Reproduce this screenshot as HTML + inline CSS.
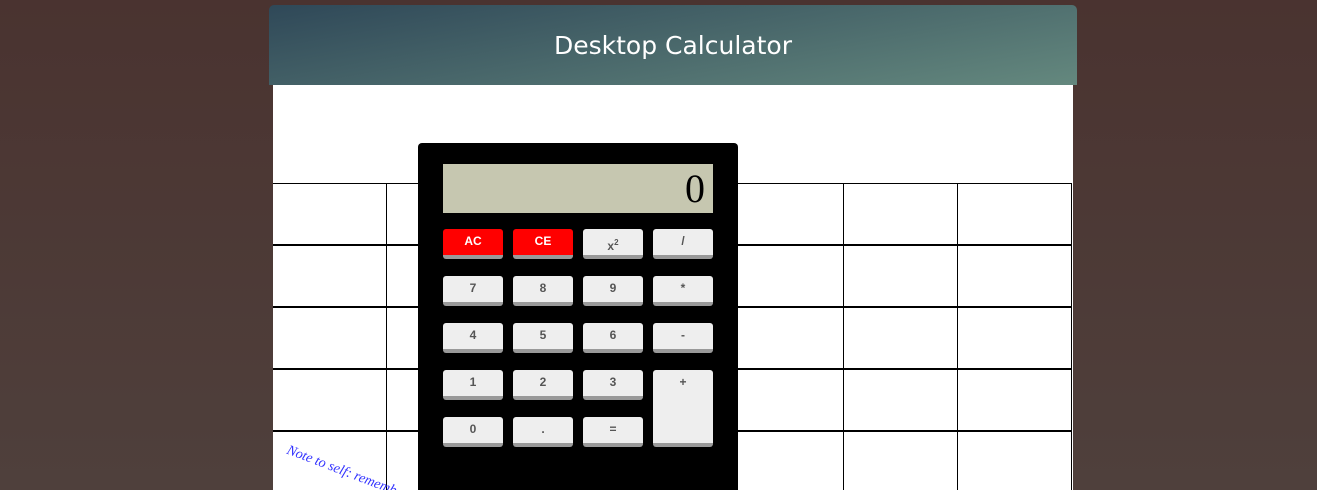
<!DOCTYPE html>
<html><head><style>
html,body{margin:0;width:1317px;height:490px;overflow:hidden}
body{background:linear-gradient(#4a3330,#4f403c);font-family:"Liberation Sans",sans-serif;position:relative}
.hdr{position:absolute;left:269px;top:5px;width:808px;height:80px;border-radius:5px 5px 0 0;background:linear-gradient(170deg,#2f4858,#64887e);color:#fff;text-align:center;line-height:82px;font-size:25px;font-family:"Comic Sans MS","DejaVu Sans",sans-serif}
.wh{position:absolute;left:273px;top:85px;width:800px;height:405px;background:#fff}
.h{position:absolute;left:273px;width:799px;height:2px;background:#000}
.v{position:absolute;top:184px;width:1px;height:306px;background:#000}
.note{position:absolute;left:290px;top:443px;color:#33f;font-family:"Liberation Serif",serif;font-style:italic;font-size:14px;transform:rotate(21deg);transform-origin:0 0;white-space:nowrap}
.calc{position:absolute;left:418px;top:143px;width:320px;height:347px;background:#000;border-radius:4px 4px 0 0}
.disp{position:absolute;left:25px;top:21px;width:270px;height:49px;background:#c6c7b0;text-align:right;font-family:"Liberation Serif",serif;font-size:40px;line-height:50px;box-sizing:border-box;padding-right:8px}
.b{position:absolute;width:60px;height:26px;background:#eee;border-radius:3px;border-bottom:4px solid #999;font-weight:bold;font-size:12px;color:#555;text-align:center;line-height:24px}
.r{background:#f00;color:#fff}
</style></head><body>
<div class="hdr">Desktop Calculator</div>
<div class="wh"></div>
<div class="h" style="top:183px;height:1px"></div>
<div class="h" style="top:244px"></div>
<div class="h" style="top:306px"></div>
<div class="h" style="top:368px"></div>
<div class="h" style="top:430px"></div>
<div class="v" style="left:386px"></div><div class="v" style="left:500px"></div><div class="v" style="left:614px"></div><div class="v" style="left:728px"></div><div class="v" style="left:843px"></div><div class="v" style="left:957px"></div><div class="v" style="left:1071px"></div>
<div class="note">Note to self: remember to</div>
<div class="calc">
<div class="disp">0</div>
<div class="b r" style="left:25px;top:86px">AC</div>
<div class="b r" style="left:95px;top:86px">CE</div>
<div class="b" style="left:165px;top:86px;line-height:28px">x<sup style="font-size:8px">2</sup></div>
<div class="b" style="left:235px;top:86px">/</div>
<div class="b" style="left:25px;top:133px">7</div><div class="b" style="left:95px;top:133px">8</div><div class="b" style="left:165px;top:133px">9</div><div class="b" style="left:235px;top:133px">*</div>
<div class="b" style="left:25px;top:180px">4</div><div class="b" style="left:95px;top:180px">5</div><div class="b" style="left:165px;top:180px">6</div><div class="b" style="left:235px;top:180px">-</div>
<div class="b" style="left:25px;top:227px">1</div><div class="b" style="left:95px;top:227px">2</div><div class="b" style="left:165px;top:227px">3</div><div class="b" style="left:235px;top:227px;height:73px">+</div>
<div class="b" style="left:25px;top:274px">0</div><div class="b" style="left:95px;top:274px">.</div><div class="b" style="left:165px;top:274px">=</div>
</div>
</body></html>
